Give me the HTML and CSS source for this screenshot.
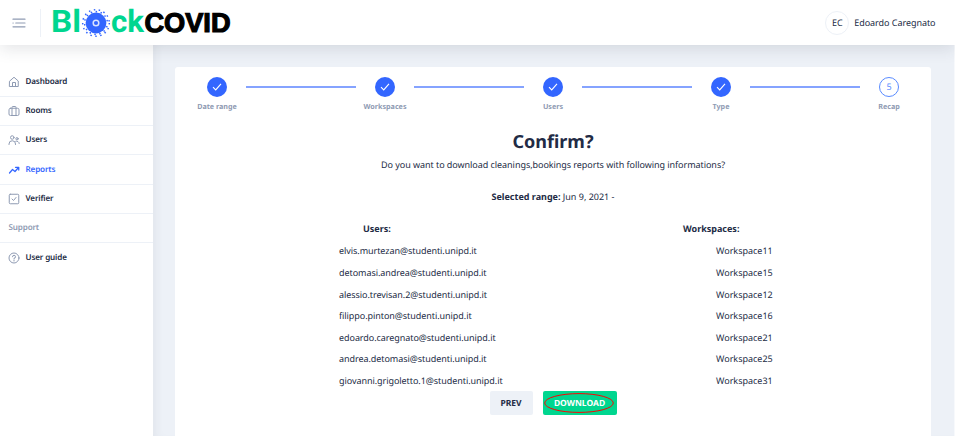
FILE: index.html
```html
<!DOCTYPE html>
<html lang="en">
<head>
<meta charset="utf-8">
<title>BlockCOVID</title>
<link rel="stylesheet" href="styles.css">
</head>
<body>
<header class="header">
  <svg class="menu-icon" viewBox="0 0 14 10"><path d="M1 1.2h12M3.8 5h9.2M1 8.8h12M1 5h.2"/></svg>
  <div class="brand">
    <svg class="logo" viewBox="0 0 184 44" aria-label="BlockCOVID">
      <g class="logo-green">
        <text x="-1" y="31" textLength="30" lengthAdjust="spacingAndGlyphs">Bl</text>
        <text x="59" y="31" textLength="33" lengthAdjust="spacingAndGlyphs">ck</text>
      </g>
      <circle class="virus-dots" cx="44" cy="22" r="13.300"/>
      <circle class="virus-dots inner-dots" cx="44" cy="22" r="11.400"/>
      <circle class="virus" cx="44" cy="22" r="10.400"/>
      <circle class="virus-core" cx="44" cy="22" r="2.800"/>
      <text class="logo-black" x="92.500" y="30.500" textLength="86" lengthAdjust="spacingAndGlyphs">COVID</text>
    </svg>
  </div>
  <div class="user"><span class="avatar">EC</span><span>Edoardo Caregnato</span></div>
</header>
<div class="shell">
  <nav class="sidebar">
    <a class="item"><svg viewBox="0 0 24 24"><path d="M3.5 10 12 2.5l8.500 7.500V21h-17zM9 21v-8h6v8"/></svg>Dashboard</a>
    <a class="item"><svg viewBox="0 0 24 24"><rect x="2" y="6.500" width="20" height="14.500" rx="3"/><path d="M8 21V4.500Q8 3 9.500 3h5Q16 3 16 4.500V21"/></svg>Rooms</a>
    <a class="item"><svg viewBox="0 0 24 24"><circle cx="8.500" cy="7" r="3.500"/><path d="M2 21v-1a6.500 6.500 0 0 1 13 0v1M15.500 14.500a5 5 0 0 1 7 4.500"/><circle cx="18" cy="9.500" r="2.300"/></svg>Users</a>
    <a class="item active"><svg viewBox="0 0 24 24"><path d="m3 18 6-7 5 4 7-8M15 6.500h6.500V12"/></svg>Reports</a>
    <a class="item"><svg viewBox="0 0 24 24"><rect x="2.500" y="2.500" width="19" height="19" rx="2"/><path d="m8 12 3 3 5-6"/></svg>Verifier</a>
    <div class="item group">Support</div>
    <a class="item last"><svg viewBox="0 0 24 24"><circle cx="12" cy="12" r="10"/><path d="M9 9.500a3 3 0 1 1 3 3V14M12 16.500v1.500"/></svg>User guide</a>
  </nav>
  <main class="content">
    <section class="card">
      <div class="stepper">
        <div class="step"><span class="dot"><svg viewBox="0 0 12 12"><path d="m2 6.200 2.700 2.700L10 2.800"/></svg></span><span>Date range</span></div>
        <i class="line"></i>
        <div class="step"><span class="dot"><svg viewBox="0 0 12 12"><path d="m2 6.200 2.700 2.700L10 2.800"/></svg></span><span>Workspaces</span></div>
        <i class="line"></i>
        <div class="step"><span class="dot"><svg viewBox="0 0 12 12"><path d="m2 6.200 2.700 2.700L10 2.800"/></svg></span><span>Users</span></div>
        <i class="line"></i>
        <div class="step"><span class="dot"><svg viewBox="0 0 12 12"><path d="m2 6.200 2.700 2.700L10 2.800"/></svg></span><span>Type</span></div>
        <i class="line"></i>
        <div class="step"><span class="dot current">5</span><span>Recap</span></div>
      </div>
      <h1>Confirm?</h1>
      <p class="question">Do you want to download cleanings,bookings reports with following informations?</p>
      <p class="range"><b>Selected range:</b> Jun 9, 2021 -</p>
      <div class="lists">
        <div class="users">
          <b>Users:</b>
          <ul><li>elvis.murtezan@studenti.unipd.it</li><li>detomasi.andrea@studenti.unipd.it</li><li>alessio.trevisan.2@studenti.unipd.it</li><li>filippo.pinton@studenti.unipd.it</li><li>edoardo.caregnato@studenti.unipd.it</li><li>andrea.detomasi@studenti.unipd.it</li><li>giovanni.grigoletto.1@studenti.unipd.it</li></ul>
        </div>
        <div class="workspaces">
          <b>Workspaces:</b>
          <ul><li>Workspace11</li><li>Workspace15</li><li>Workspace12</li><li>Workspace16</li><li>Workspace21</li><li>Workspace25</li><li>Workspace31</li></ul>
        </div>
      </div>
      <div class="actions">
        <button class="prev">PREV</button>
        <button class="download">DOWNLOAD<svg viewBox="0 0 70 20"><ellipse cx="35" cy="10" rx="34.300" ry="9.400"/></svg></button>
      </div>
    </section>
  </main>
</div>
</body>
</html>
```
FILE: styles.css
```css
* { box-sizing: border-box; }
body {
  margin: 0;
  height: 436px;
  overflow: hidden;
  display: flex;
  flex-direction: column;
  background: #edf1f7;
  color: #222b45;
  font: 9px/20px "Noto Sans", sans-serif;
  text-rendering: geometricPrecision;
}
.header {
  height: 45px;
  flex: none;
  display: flex;
  align-items: center;
  padding: 0 19.500px 0 12px;
  background: #fff;
  box-shadow: 0 4px 16px rgba(44, 51, 73, .13);
  position: relative;
  z-index: 1;
}
.menu-icon { width: 14px; height: 10px; fill: none; stroke: #8f9bb3; stroke-width: 1.200; stroke-linecap: round; }
.brand { height: 28px; margin-left: 14px; padding-left: 11px; border-left: 1px solid #edf1f7; display: flex; align-items: center; }
.logo { width: 184px; height: 44px; flex: none; overflow: visible; }
.logo-green { font: 700 31px Roboto, sans-serif; fill: #00d68f; }
.logo-black { font: 700 27px "Liberation Sans", sans-serif; fill: #000; stroke: #000; stroke-width: 1.200; }
.virus { fill: #3366ff; }
.virus-core { fill: #3366ff; stroke: #dbe4ff; stroke-width: 1.500; }
.virus-dots { fill: none; stroke: #3366ff; stroke-width: 1.500; stroke-dasharray: 1.500 3.500; }
.inner-dots { stroke-dashoffset: 2; }
.user { margin-left: auto; display: flex; align-items: center; gap: 5px; letter-spacing: -.050px; }
.avatar { width: 24px; height: 24px; border: 1px solid #edf1f7; border-radius: 50%; display: grid; place-items: center; }
.shell { flex: 1; min-height: 0; display: flex; }
.sidebar { width: 153px; padding-top: 22.500px; background: #fff; flex: none; }
.item {
  height: 29.300px;
  padding-left: 8px;
  display: flex;
  align-items: center;
  gap: 5.500px;
  border-bottom: 1px solid #edf1f7;
  font-size: 8.100px;
  font-weight: 600;
  letter-spacing: -.150px;
}
.item svg { width: 12px; height: 12px; fill: none; stroke: #8f9bb3; stroke-width: 2; stroke-linejoin: round; stroke-linecap: round; }
.active { color: #3366ff; }
.active svg { stroke: #3366ff; stroke-width: 2.500; }
.group { padding-left: 8.500px; color: #8f9bb3; }
.last { border: 0; }
.content { flex: 1; padding: 22px 23px 0 22px; border-right: 1px solid #f7f9fc; box-shadow: inset 8px 0 8px -5px rgba(44, 51, 73, .06); }
.card { height: 390px; padding-top: 9.500px; border-radius: 3px; background: #fff; text-align: center; }
.stepper { display: flex; padding: 0 12px; }
.step { width: 60px; flex: none; display: flex; flex-direction: column; align-items: center; color: #8f9bb3; font-size: 7.200px; font-weight: 700; }
.dot { width: 20px; height: 20px; border-radius: 50%; display: grid; place-items: center; background: #3366ff; }
.dot svg { width: 12px; height: 12px; fill: none; stroke: #fff; stroke-width: 1.100; }
.current { background: #fff; border: 1px solid #598bff; color: #598bff; font-size: 9px; font-weight: 400; line-height: 18px; }
.line { flex: 1; height: 2px; margin: 9.500px -1px 0 -1.500px; background: #85a3ff; }
h1 { margin: 13.500px 0 0; font-size: 18px; line-height: 24px; }
p { margin: 0; }
.question { margin-top: 1px; letter-spacing: -.050px; }
.range { margin-top: 12.300px; }
.lists { margin-top: 11.700px; padding-left: 164px; display: grid; grid-template-columns: 344px 1fr; text-align: left; }
ul { margin: 1.400px 0 0; padding: 0; list-style: none; line-height: 21.600px; }
.users ul { letter-spacing: -.060px; }
.users b { padding-left: 24px; }
.workspaces ul { padding-left: 33px; }
.actions { display: flex; justify-content: center; gap: 10px; margin-top: -.600px; }
button { height: 24px; padding: 1px 0 0; border: 0; border-radius: 2px; font: 700 8.500px "Noto Sans", sans-serif; text-rendering: inherit; }
.prev { width: 43px; background: #edf1f7; color: #222b45; }
.download { width: 74px; background: #00d68f; color: #fff; position: relative; }
.download svg { position: absolute; left: 1px; top: 2px; width: 70px; height: 20px; fill: none; stroke: #f00; }
```
